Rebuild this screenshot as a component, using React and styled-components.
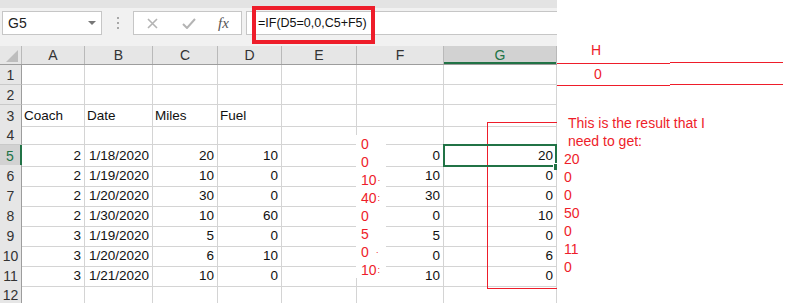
import React from 'react';
import styled, { createGlobalStyle } from 'styled-components';

const GlobalStyle = createGlobalStyle`
  html, body {
    margin: 0;
    padding: 0;
    background: #ffffff;
    overflow: hidden;
  }
  body {
    font-family: "Liberation Sans", Arial, sans-serif;
  }
`;

const RED = '#ee1d2a';
const GREEN = '#217346';
const GRID = '#d4d4d4';
const HEAD_BG = '#e6e6e6';
const HEAD_SEL = '#d2d2d2';

const COLS = '22px 63px 68px 65px 64px 75px 87px 113px';

const Page = styled.div`
  display: flex;
  align-items: flex-start;
  width: 792px;
  height: 303px;
  overflow: hidden;
`;

const Workbook = styled.div`
  width: 557px;
  display: flex;
  flex-direction: column;
  flex-shrink: 0;
`;

const TopStrip = styled.div`
  height: 8px;
  background: #e3e3e3;
`;

const FormulaBar = styled.div`
  height: 38px;
  box-sizing: border-box;
  padding: 3px 0 11px 2px;
  display: flex;
  align-items: stretch;
  background: #f1f1f1;
`;

const NameBox = styled.div`
  width: 100px;
  box-sizing: border-box;
  background: #ffffff;
  border: 1px solid #c6c6c6;
  display: flex;
  align-items: center;
  justify-content: space-between;
  padding: 0 5px 0 5px;
  font-size: 14px;
  color: #222;
`;

const Caret = styled.span`
  width: 0;
  height: 0;
  border-left: 4px solid transparent;
  border-right: 4px solid transparent;
  border-top: 4px solid #777;
`;

const Grip = styled.div`
  width: 31px;
  display: flex;
  flex-direction: column;
  align-items: center;
  justify-content: center;
  gap: 3px;
  span {
    width: 2px;
    height: 2px;
    background: #a8a8a8;
  }
`;

const ActionBox = styled.div`
  width: 109px;
  box-sizing: border-box;
  background: #ffffff;
  border: 1px solid #c6c6c6;
  display: flex;
  align-items: center;
  padding-left: 13px;
  gap: 24px;
`;

const Fx = styled.span`
  font-family: "Liberation Serif", "Times New Roman", serif;
  font-style: italic;
  font-size: 15px;
  color: #555;
  margin-left: -2px;
`;

const FormulaBox = styled.div`
  position: relative;
  flex: 1;
  margin-left: 4px;
  box-sizing: border-box;
  background: #ffffff;
  border: 1px solid #c6c6c6;
  border-right: none;
  display: flex;
  align-items: center;
  padding-left: 11px;
  font-size: 12.5px;
  color: #111;
`;

const Highlight = styled.div`
  position: absolute;
  left: 5px;
  top: -6px;
  width: 123px;
  height: 38px;
  box-sizing: border-box;
  border: 4px solid ${RED};
  pointer-events: none;
`;

const Sheet = styled.div`
  position: relative;
  height: 257px;
  overflow: hidden;
  font-size: 13.5px;
  color: #111;
`;

const HeaderRow = styled.div`
  display: grid;
  grid-template-columns: ${COLS};
  height: 19px;
  background: ${HEAD_BG};
  border-bottom: 1px solid #9d9d9d;
  box-sizing: border-box;
`;

const ColHead = styled.div`
  display: flex;
  align-items: center;
  justify-content: center;
  box-sizing: border-box;
  border-right: 1px solid #b9b9b9;
  font-size: 14px;
  color: ${(p) => (p.$selected ? GREEN : '#333')};
  background: ${(p) => (p.$selected ? HEAD_SEL : 'transparent')};
  box-shadow: ${(p) => (p.$selected ? `inset 0 -2px 0 ${GREEN}` : 'none')};
`;

const Corner = styled.div`
  display: flex;
  align-items: flex-end;
  justify-content: flex-end;
  padding: 0 3px 2px 0;
  box-sizing: border-box;
  border-right: 1px solid #b9b9b9;
`;

const Row = styled.div`
  display: grid;
  grid-template-columns: ${COLS};
  height: 20px;
`;

const RowHead = styled.div`
  display: flex;
  align-items: center;
  justify-content: center;
  box-sizing: border-box;
  background: ${(p) => (p.$selected ? HEAD_SEL : HEAD_BG)};
  border-bottom: 1px solid #c9c9c9;
  border-right: ${(p) => (p.$selected ? `2px solid ${GREEN}` : '1px solid #9d9d9d')};
  font-size: 14px;
  color: ${(p) => (p.$selected ? GREEN : '#333')};
`;

const Cell = styled.div`
  box-sizing: border-box;
  border-right: 1px solid ${GRID};
  border-bottom: 1px solid ${GRID};
  padding: 0 3px 0 2px;
  line-height: 21px;
  white-space: nowrap;
  text-align: ${(p) => (p.$num ? 'right' : 'left')};
`;

const Selection = styled.div`
  position: absolute;
  left: 443px;
  top: 98px;
  width: 114px;
  height: 23px;
  box-sizing: border-box;
  border: 2px solid ${GREEN};
  pointer-events: none;
`;

const FillHandle = styled.div`
  position: absolute;
  left: 553px;
  top: 117px;
  width: 6px;
  height: 6px;
  background: ${GREEN};
  border: 1px solid #fff;
  border-right: none;
  border-bottom: none;
`;

const ResultFrame = styled.div`
  position: absolute;
  left: 487px;
  top: 76px;
  width: 70px;
  height: 167px;
  box-sizing: border-box;
  border: 1px solid ${RED};
  border-right: none;
  pointer-events: none;
`;

const Pasted = styled.div`
  position: absolute;
  left: 356px;
  top: 89px;
  width: 30px;
  height: 143px;
  background: #ffffff;
  padding-left: 5px;
  box-sizing: border-box;
`;

const PastedLine = styled.div`
  height: 18px;
  line-height: 18px;
  font-size: 14px;
  color: ${RED};
  white-space: nowrap;
  span {
    font-size: 9px;
    vertical-align: 2px;
    margin-left: ${(p) => p.$gap || 1}px;
  }
`;

const Notes = styled.div`
  flex: 1;
  display: flex;
  flex-direction: column;
  padding-top: 41px;
  color: ${RED};
  font-size: 14px;
`;

const HLabel = styled.div`
  height: 18px;
  line-height: 18px;
  padding-left: 34px;
`;

const HRow = styled.div`
  display: flex;
  margin-top: 4px;
`;

const HCell = styled.div`
  width: 113px;
  height: 23px;
  box-sizing: border-box;
  border-top: 1px solid ${RED};
  border-bottom: 1px solid ${RED};
  margin-top: ${(p) => p.$shift || 0}px;
  padding-left: 37px;
  line-height: 20px;
`;

const Expected = styled.div`
  margin-top: 28px;
  padding-left: 7px;
  display: flex;
  flex-direction: column;
`;

const NoteLine = styled.div`
  height: 18px;
  line-height: 18px;
  padding-left: ${(p) => (p.$text ? 4 : 0)}px;
  white-space: nowrap;
`;

const data = [
  [5, 2, '1/18/2020', 20, 10, 0, 20],
  [6, 2, '1/19/2020', 10, 0, 10, 0],
  [7, 2, '1/20/2020', 30, 0, 30, 0],
  [8, 2, '1/30/2020', 10, 60, 0, 10],
  [9, 3, '1/19/2020', 5, 0, 5, 0],
  [10, 3, '1/20/2020', 6, 10, 0, 6],
  [11, 3, '1/21/2020', 10, 0, 10, 0],
];

// pasted column from another sheet, its right edge is cut off in the shot
const pasted = [
  ['0', '', 1],
  ['0', '', 1],
  ['10', '·', 1],
  ['40', ':', 1],
  ['0', '', 1],
  ['5', '', 1],
  ['0', '·', 7],
  ['10', ':', 1],
];
const expected = ['20', '0', '0', '50', '0', '11', '0'];

function EmptyRow({ n, children }) {
  return (
    <Row>
      <RowHead>{n}</RowHead>
      {children || (
        <>
          <Cell />
          <Cell />
          <Cell />
          <Cell />
          <Cell />
          <Cell />
          <Cell />
        </>
      )}
    </Row>
  );
}

export default function App() {
  return (
    <Page>
      <GlobalStyle />
      <Workbook>
        <TopStrip />
        <FormulaBar>
          <NameBox>
            G5
            <Caret />
          </NameBox>
          <Grip>
            <span />
            <span />
            <span />
          </Grip>
          <ActionBox>
            <svg width="11" height="11" viewBox="0 0 11 11">
              <path d="M1 1 L10 10 M10 1 L1 10" stroke="#b4b4b4" strokeWidth="1.6" fill="none" />
            </svg>
            <svg width="14" height="11" viewBox="0 0 14 11">
              <path d="M1 6 L5 10 L13 1" stroke="#b4b4b4" strokeWidth="2" fill="none" />
            </svg>
            <Fx>fx</Fx>
          </ActionBox>
          <FormulaBox>
            =IF(D5=0,0,C5+F5)
            <Highlight />
          </FormulaBox>
        </FormulaBar>
        <Sheet>
          <HeaderRow>
            <Corner>
              <svg width="12" height="12" viewBox="0 0 12 12">
                <polygon points="12,0 12,12 0,12" fill="#bdbdbd" />
              </svg>
            </Corner>
            {['A', 'B', 'C', 'D', 'E', 'F'].map((c) => (
              <ColHead key={c}>{c}</ColHead>
            ))}
            <ColHead $selected>G</ColHead>
          </HeaderRow>
          <EmptyRow n={1} />
          <EmptyRow n={2} />
          <EmptyRow n={3}>
            <Cell>Coach</Cell>
            <Cell>Date</Cell>
            <Cell>Miles</Cell>
            <Cell>Fuel</Cell>
            <Cell />
            <Cell />
            <Cell />
          </EmptyRow>
          <EmptyRow n={4} />
          {data.map(([n, coach, date, miles, fuel, f, g]) => (
            <Row key={n}>
              <RowHead $selected={n === 5}>{n}</RowHead>
              <Cell $num>{coach}</Cell>
              <Cell $num>{date}</Cell>
              <Cell $num>{miles}</Cell>
              <Cell $num>{fuel}</Cell>
              <Cell />
              <Cell $num>{f}</Cell>
              <Cell $num>{g}</Cell>
            </Row>
          ))}
          <EmptyRow n={12} />
          <Pasted>
            {pasted.map(([v, tail, gap], i) => (
              <PastedLine key={i} $gap={gap}>
                {v}
                {tail && <span>{tail}</span>}
              </PastedLine>
            ))}
          </Pasted>
          <ResultFrame />
          <Selection />
          <FillHandle />
        </Sheet>
      </Workbook>
      <Notes>
        <HLabel>H</HLabel>
        <HRow>
          <HCell>0</HCell>
          <HCell $shift={-1} />
        </HRow>
        <Expected>
          <NoteLine $text>This is the result that I</NoteLine>
          <NoteLine $text>need to get:</NoteLine>
          {expected.map((v, i) => (
            <NoteLine key={i}>{v}</NoteLine>
          ))}
        </Expected>
      </Notes>
    </Page>
  );
}
